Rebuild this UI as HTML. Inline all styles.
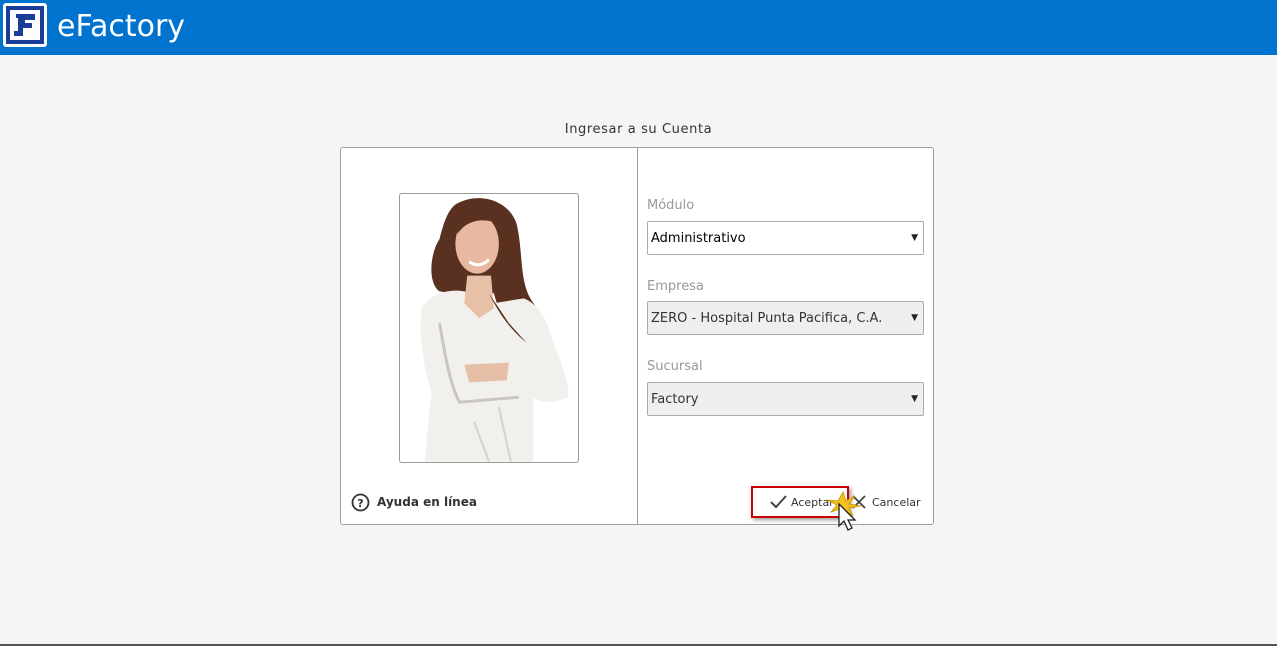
<!DOCTYPE html>
<html><head><meta charset="utf-8">
<style>
*{box-sizing:border-box;margin:0;padding:0}
body{width:1277px;height:646px;background:#f4f5f7;font-family:"DejaVu Sans","Liberation Sans",sans-serif;position:relative;overflow:hidden}
.top{position:absolute;left:0;top:0;width:1277px;height:55px;background:#0073cf}
.logo{position:absolute;left:3px;top:3px;width:44px;height:44px;background:#fff;border-radius:3px}
.logo .in{position:absolute;left:3px;top:3px;width:38px;height:38px;background:#1a3d9a}
.brand{position:absolute;left:57px;top:9px;color:#fff;font-size:30px;font-family:"DejaVu Sans",sans-serif}
.title{position:absolute;left:0;width:1277px;top:122px;text-align:center;font-size:13px;color:#333;letter-spacing:.6px}
.panel{position:absolute;top:147px;height:378px;background:#fff;border:1px solid #a0a0a0}
.lab{position:absolute;left:647px;font-size:13px;color:#999}
.sel{position:absolute;left:647px;width:277px;height:34px;border:1px solid #aaa;border-radius:2px;font-size:13px;padding:9px 0 0 3px;color:#000}
.sel.g{background:#efefef;color:#333}
.sel:after{content:"▼";position:absolute;right:5px;top:11px;font-size:9px;color:#222}
.bottomline{position:absolute;left:0;top:644px;width:1277px;height:2px;background:#555}
</style></head><body>
<div class="top">
 <div class="logo"><div class="in">
  <svg width="38" height="38" viewBox="0 0 38 38"><rect x="4" y="4" width="30" height="30" fill="#fff"/><path d="M10 8H29V14H19V17H26V22H17V30H8V25H12V12H10Z" fill="#1a3d9a"/></svg>
 </div></div>
 <div class="brand">eFactory</div>
</div>
<div class="title">Ingresar a su Cuenta</div>
<div class="panel" style="left:340px;width:298px;border-radius:3px 0 0 3px"></div>
<div class="panel" style="left:637px;width:297px;border-radius:0 3px 3px 0"></div>
<div style="position:absolute;left:399px;top:193px;width:180px;height:270px;border:1px solid #999;border-radius:3px;overflow:hidden;background:#fff">
<svg width="178" height="268" viewBox="0 0 180 270">
 <path d="M60 8C80-2 110 5 118 30C125 60 120 90 135 110C145 125 140 150 125 152C110 140 100 120 95 100L70 100C60 110 55 100 40 98C28 90 30 60 40 45C45 25 50 12 60 8Z" fill="#5a3020"/>
 <path d="M22 115C30 100 50 95 65 98L95 110L125 105C140 110 150 130 155 150C165 175 172 195 170 205C155 212 140 210 135 205L135 270L25 270C28 240 30 215 32 200C25 180 18 140 22 115Z" fill="#f2f0ec"/>
 <path d="M40 130C45 160 50 190 60 210L120 205" stroke="#c9c6c0" stroke-width="3" fill="none"/>
 <path d="M100 215L112 270M75 230L90 270" stroke="#d5d2cc" stroke-width="2" fill="none"/>
 <ellipse cx="78" cy="50" rx="22" ry="30" fill="#e8b9a0"/>
 <path d="M58 25C70 10 95 15 100 30C90 25 70 22 58 40Z" fill="#5a3020"/>
 <path d="M70 68Q80 75 90 66" stroke="#fff" stroke-width="3" fill="none"/>
 <path d="M65 172L110 170L108 188L70 190Z" fill="#e6bfa8"/>
 <path d="M68 82L92 82L95 115L80 125L65 110Z" fill="#e8c0a8"/>
 <path d="M90 100C100 120 110 135 128 150L110 130Z" fill="#5a3020"/>
</svg>
</div>
<svg style="position:absolute;left:351px;top:493px" width="19" height="19" viewBox="0 0 19 19"><circle cx="9.5" cy="9.5" r="8" fill="none" stroke="#333" stroke-width="1.8"/><text x="9.5" y="14" font-size="11" font-weight="bold" text-anchor="middle" fill="#333" font-family="DejaVu Sans">?</text></svg>
<div style="position:absolute;left:377px;top:495px;font-size:12px;font-weight:bold;color:#333">Ayuda en línea</div>
<div class="lab" style="top:198px">Módulo</div>
<div class="sel" style="top:221px">Administrativo</div>
<div class="lab" style="top:279px">Empresa</div>
<div class="sel g" style="top:301px">ZERO - Hospital Punta Pacifica, C.A.</div>
<div class="lab" style="top:359px">Sucursal</div>
<div class="sel g" style="top:382px">Factory</div>
<div style="position:absolute;left:751px;top:486px;width:98px;height:32px;border:2px solid #c00;box-shadow:2px 2px 4px rgba(0,0,0,.4)"></div>
<svg style="position:absolute;left:770px;top:494px" width="18" height="16" viewBox="0 0 18 16"><path d="M1 8L6 13L16 2" stroke="#444" stroke-width="2" fill="none"/></svg>
<div style="position:absolute;left:791px;top:496px;font-size:11px;color:#333">Aceptar</div>
<svg style="position:absolute;left:851px;top:494px" width="16" height="16" viewBox="0 0 16 16"><path d="M2 2L14 14M14 2L2 14" stroke="#444" stroke-width="1.8"/></svg>
<div style="position:absolute;left:872px;top:496px;font-size:11px;color:#333">Cancelar</div>
<svg style="position:absolute;left:825px;top:490px" width="40" height="44" viewBox="0 0 40 44">
 <path d="M18 2L21 11L30 6L24 14L36 16L24 18L28 26L20 20L16 30L15 19L6 22L12 15L2 10L13 11Z" fill="#f2c020" stroke="#c99000" stroke-width=".8"/>
 <path d="M14 14L14 36L19 31L23 40L27 38L23 30L30 30Z" fill="#fff" stroke="#222" stroke-width="1.3"/>
</svg>
<div class="bottomline"></div>
</body></html>
